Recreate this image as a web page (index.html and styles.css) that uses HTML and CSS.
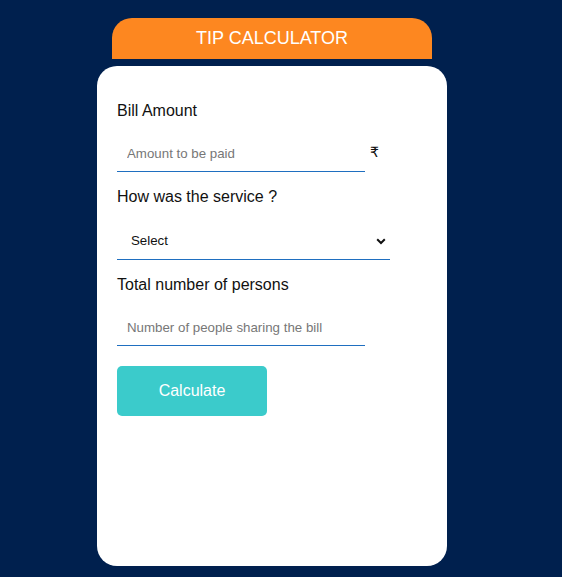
FILE: index.html
```html
<!DOCTYPE html>
<html>
<head>
<meta charset="utf-8">
<link rel="stylesheet" href="styles.css">
</head>
<body>
<div class="app">
  <div class="header">TIP CALCULATOR</div>
  <div class="card">
    <label class="label">Bill Amount</label>
    <div class="row">
      <input class="field" type="text" placeholder="Amount to be paid">
      <span class="rupee">₹</span>
    </div>
    <label class="label mid">How was the service ?</label>
    <div class="select-wrap">
      <select class="select">
        <option>Select</option>
      </select>
      <svg class="chev" width="10" height="7" viewBox="0 0 10 7"><path d="M1.2 1.3 L5 5 L8.8 1.3" fill="none" stroke="#111" stroke-width="2"/></svg>
    </div>
    <label class="label mid">Total number of persons</label>
    <div class="row">
      <input class="field" type="text" placeholder="Number of people sharing the bill">
    </div>
    <button class="btn">Calculate</button>
  </div>
</div>
</body>
</html>
```
FILE: styles.css
```css
html, body {
  margin: 0;
  padding: 0;
  background: #00204e;
  font-family: "Liberation Sans", Arial, sans-serif;
}
.app {
  width: 350px;
  margin-left: 97px;
  padding-top: 18px;
  display: flex;
  flex-direction: column;
  align-items: center;
}
.header {
  width: 320px;
  height: 41px;
  background: #fd8720;
  color: #fff;
  font-size: 18px;
  line-height: 41px;
  text-align: center;
  border-radius: 20px 20px 0 0;
  margin-bottom: 7px;
}
.card {
  box-sizing: border-box;
  width: 350px;
  height: 500px;
  background: #fff;
  border-radius: 20px;
  padding: 36px 20px 0 20px;
  display: flex;
  flex-direction: column;
  align-items: flex-start;
}
.label {
  display: block;
  font-size: 16px;
  line-height: 18px;
  color: #111;
}
.label.mid {
  margin-top: 16px;
}
.row {
  display: flex;
  align-items: center;
  margin-top: 15px;
}
.field {
  box-sizing: border-box;
  width: 248px;
  height: 37px;
  border: none;
  border-bottom: 1px solid #1f6fc0;
  padding: 0 10px;
  font-family: "Liberation Sans", Arial, sans-serif;
  font-size: 13.3px;
  outline: none;
  background: transparent;
}
.field::placeholder {
  color: #777;
}
.rupee {
  margin-left: 5px;
  font-size: 14px;
  color: #111;
  font-family: "DejaVu Sans", sans-serif;
  margin-top: -4px;
}
.select-wrap {
  position: relative;
  margin-top: 16px;
}
.select {
  appearance: none;
  -webkit-appearance: none;
  box-sizing: border-box;
  width: 273px;
  height: 38px;
  border: none;
  border-bottom: 1px solid #1f6fc0;
  padding: 0 14px;
  font-family: "Liberation Sans", Arial, sans-serif;
  font-size: 13.3px;
  color: #111;
  background: transparent;
  outline: none;
}
.chev {
  position: absolute;
  right: 4px;
  top: 16px;
}
.btn {
  margin-top: 20px;
  width: 150px;
  height: 50px;
  border: none;
  border-radius: 5px;
  background: #3bcbcb;
  color: #fff;
  font-family: "Liberation Sans", Arial, sans-serif;
  font-size: 16px;
}
```
